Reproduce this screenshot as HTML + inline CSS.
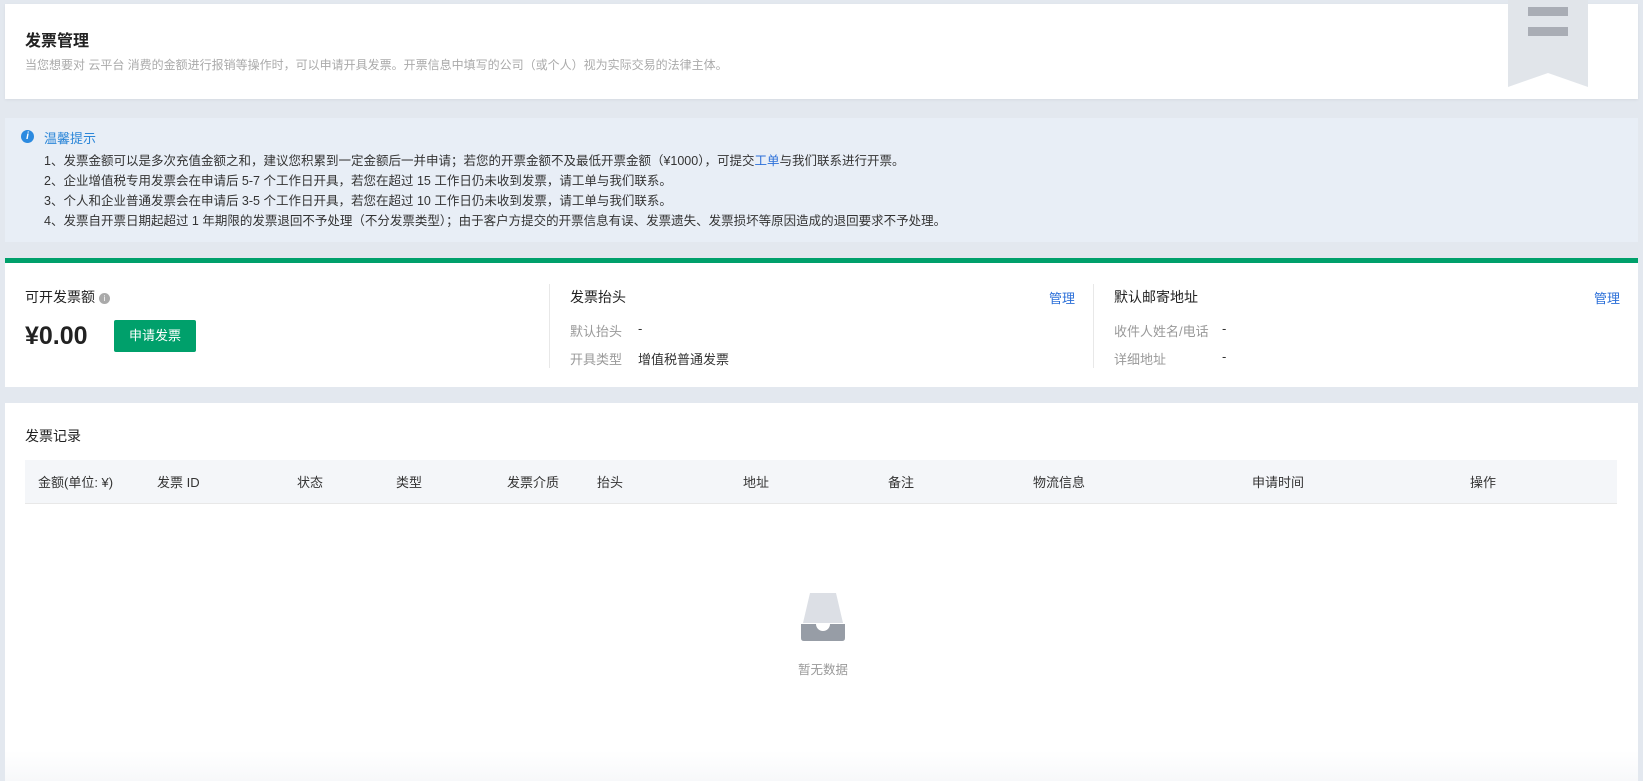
<!DOCTYPE html>
<html><head><meta charset="utf-8"><style>
*{box-sizing:border-box;margin:0;padding:0}
body{width:1643px;height:781px;background:#e3e8ef;font-family:"Liberation Sans","Noto Sans CJK SC",sans-serif;color:#333;font-size:13px;position:relative;overflow:hidden}
.abs{position:absolute;white-space:nowrap}
.card{position:absolute;left:5px;width:1633px;background:#fff}
.gray{color:#999}
</style></head><body>
<div class="card" style="top:4px;height:95px;box-shadow:0 1px 3px rgba(0,0,0,.06)"></div>
<svg class="abs" style="left:1508px;top:0" width="80" height="87"><path d="M0 0H80V87L40 73L0 87Z" fill="#e1e5ea"/><rect x="20" y="7" width="40" height="9" fill="#a9adb5"/><rect x="20" y="27" width="40" height="9" fill="#a9adb5"/></svg>
<div class="abs" style="left:25px;top:27px;font-size:16px;font-weight:bold;color:#222">发票管理</div>
<div class="abs gray" style="left:25px;top:56px;font-size:12px;color:#aaa">当您想要对 云平台 消费的金额进行报销等操作时，可以申请开具发票。开票信息中填写的公司（或个人）视为实际交易的法律主体。</div>

<div class="abs" style="left:5px;top:118px;width:1633px;height:124px;background:#e8eef6"></div>
<div class="abs" style="left:21px;top:130px;width:13px;height:13px;border-radius:50%;background:#2b8ae0;color:#fff;font-size:10px;line-height:13px;text-align:center;font-weight:bold;font-style:italic">i</div>
<div class="abs" style="left:44px;top:128px;color:#2b86d8;font-size:13px">温馨提示</div>
<div class="abs" style="left:44px;top:151px;line-height:20px;font-size:12.5px;color:#333">1、发票金额可以是多次充值金额之和，建议您积累到一定金额后一并申请；若您的开票金额不及最低开票金额（¥1000），可提交<span style="color:#2b6fd8">工单</span>与我们联系进行开票。<br>2、企业增值税专用发票会在申请后 5-7 个工作日开具，若您在超过 15 工作日仍未收到发票，请工单与我们联系。<br>3、个人和企业普通发票会在申请后 3-5 个工作日开具，若您在超过 10 工作日仍未收到发票，请工单与我们联系。<br>4、发票自开票日期起超过 1 年期限的发票退回不予处理（不分发票类型）；由于客户方提交的开票信息有误、发票遗失、发票损坏等原因造成的退回要求不予处理。</div>

<div class="abs" style="left:5px;top:258px;width:1633px;height:5px;background:#00a06b"></div>
<div class="card" style="top:263px;height:124px"></div>
<div class="abs" style="left:25px;top:287px;font-size:14px;color:#222">可开发票额 <span style="display:inline-block;width:11px;height:11px;border-radius:50%;background:#aaa;color:#fff;font-size:8px;line-height:11px;text-align:center;vertical-align:1px">i</span></div>
<div class="abs" style="left:25px;top:322px;font-size:25px;font-weight:bold;color:#222">¥0.00</div>
<div class="abs" style="left:114px;top:320px;width:82px;height:32px;background:#00a06b;color:#fff;border-radius:2px;text-align:center;line-height:32px;font-size:13px">申请发票</div>
<div class="abs" style="left:549px;top:284px;width:1px;height:84px;background:#e8e8e8"></div>
<div class="abs" style="left:1093px;top:284px;width:1px;height:84px;background:#e8e8e8"></div>
<div class="abs" style="left:570px;top:287px;font-size:14px;color:#222">发票抬头</div>
<div class="abs" style="left:1049px;top:288px;color:#2b6fd8">管理</div>
<div class="abs gray" style="left:570px;top:321px">默认抬头</div><div class="abs" style="left:638px;top:321px">-</div>
<div class="abs gray" style="left:570px;top:349px">开具类型</div><div class="abs" style="left:638px;top:349px">增值税普通发票</div>
<div class="abs" style="left:1114px;top:287px;font-size:14px;color:#222">默认邮寄地址</div>
<div class="abs" style="left:1594px;top:288px;color:#2b6fd8">管理</div>
<div class="abs gray" style="left:1114px;top:321px">收件人姓名/电话</div><div class="abs" style="left:1222px;top:321px">-</div>
<div class="abs gray" style="left:1114px;top:349px">详细地址</div><div class="abs" style="left:1222px;top:349px">-</div>

<div class="card" style="top:403px;height:378px;background:linear-gradient(#fff 92%,#f7f8fa)"></div>
<div class="abs" style="left:25px;top:426px;font-size:14px;color:#222">发票记录</div>
<div class="abs" style="left:25px;top:460px;width:1592px;height:44px;background:#f4f6f9;border-bottom:1px solid #e8e8e8"></div>
<div class="abs" style="top:472px;left:38px">金额(单位: ¥)</div>
<div class="abs" style="top:472px;left:157px">发票 ID</div>
<div class="abs" style="top:472px;left:297px">状态</div>
<div class="abs" style="top:472px;left:396px">类型</div>
<div class="abs" style="top:472px;left:507px">发票介质</div>
<div class="abs" style="top:472px;left:597px">抬头</div>
<div class="abs" style="top:472px;left:743px">地址</div>
<div class="abs" style="top:472px;left:888px">备注</div>
<div class="abs" style="top:472px;left:1033px">物流信息</div>
<div class="abs" style="top:472px;left:1252px">申请时间</div>
<div class="abs" style="top:472px;left:1470px">操作</div>
<svg class="abs" style="left:801px;top:593px" width="44" height="48"><path d="M9 0H35L42 30H2Z" fill="#dcdfe5"/><path d="M0 31H15A7 7 0 0 0 29 31H44V45Q44 48 41 48H3Q0 48 0 45Z" fill="#979da6"/></svg>
<div class="abs" style="left:798px;top:659px;color:#999;font-size:12.5px">暂无数据</div>
</body></html>
